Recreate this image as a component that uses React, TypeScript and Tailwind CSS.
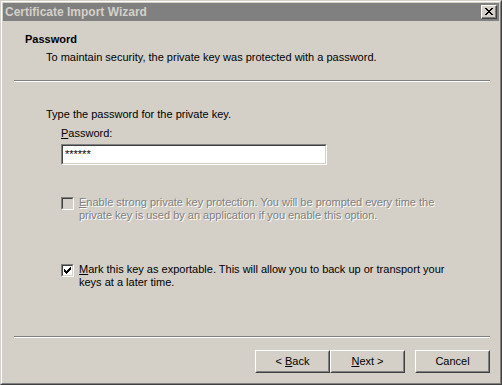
import React from "react";

const font = { fontFamily: '"Liberation Sans", Arial, sans-serif' };

function Btn({ children, ml = "" }: { children: React.ReactNode; ml?: string }) {
  return (
    <div
      className={`h-[23px] w-[75px] border border-t-white border-l-white border-r-[#404040] border-b-[#404040] ${ml}`}
    >
      <div className="flex h-full w-full items-center justify-center border border-t-[#d4d0c8] border-l-[#d4d0c8] border-r-[#808080] border-b-[#808080] text-[11px] text-black">
        {children}
      </div>
    </div>
  );
}

function Sunken({ className, children }: { className: string; children?: React.ReactNode }) {
  return (
    <div className={`border border-t-[#808080] border-l-[#808080] border-r-white border-b-white ${className}`}>
      <div className="h-full w-full border border-t-[#404040] border-l-[#404040] border-r-[#d4d0c8] border-b-[#d4d0c8]">
        {children}
      </div>
    </div>
  );
}

function Separator({ className }: { className: string }) {
  return (
    <div className={className}>
      <div className="h-px bg-[#808080]" />
      <div className="h-px bg-white" />
    </div>
  );
}

export default function App() {
  return (
    <div
      style={font}
      className="h-[385px] w-[502px] border border-t-[#d4d0c8] border-l-[#d4d0c8] border-r-[#404040] border-b-[#404040] bg-[#d4d0c8]"
    >
      <div className="flex h-full flex-col border border-t-white border-l-white border-r-[#808080] border-b-[#808080] p-px">
        {/* title bar */}
        <div className="flex h-[18px] items-center justify-between bg-[#808080] pl-[2px] pr-[2px]">
          <span className="text-[12px] font-bold leading-none text-[#d4d0c8]">Certificate Import Wizard</span>
          <div className="h-[14px] w-[16px] border border-t-white border-l-white border-r-[#404040] border-b-[#404040] bg-[#d4d0c8]">
            <div className="flex h-full w-full items-center justify-center border-b border-r border-b-[#808080] border-r-[#808080]">
              <svg width="8" height="7" viewBox="0 0 8 7">
                <path d="M0 0h2v1h1v1h2V1h1V0h2v1H7v1H6v1H5v1h1v1h1v1h1v1H6V6H5V5H3v1H2v1H0V6h1V5h1V4h1V3H2V2H1V1H0z" fill="#000" />
              </svg>
            </div>
          </div>
        </div>

        {/* header */}
        <div className="pl-[22px] pt-[12px]">
          <div className="text-[11px] font-bold leading-[13px] text-black">Password</div>
          <div className="mt-[5px] pl-[21px] text-[11px] leading-[13px] text-black">
            To maintain security, the private key was protected with a password.
          </div>
        </div>
        <Separator className="ml-[11px] mr-[9px] mt-[16px]" />

        {/* body */}
        <div className="pl-[43px] pt-[26px] text-[11px] leading-[13px] text-black">
          <div>Type the password for the private key.</div>
          <div className="pl-[15px] pt-[6px]">
            <div className="first-letter:underline">Password:</div>
            <Sunken className="mt-[4px] h-[21px] w-[266px]">
              <div className="h-full bg-white pl-[2px] text-[11px] leading-[17px]">******</div>
            </Sunken>

            <div className="mt-[31px] flex items-start gap-[5px] text-[#808080] [text-shadow:1px_1px_0_#fff]">
              <Sunken className="mt-px h-[13px] w-[13px] shrink-0">
                <div className="h-full bg-[#d4d0c8]" />
              </Sunken>
              <div className="w-[360px] first-letter:underline">
                Enable strong private key protection. You will be prompted every time the
                private key is used by an application if you enable this option.
              </div>
            </div>

            <div className="mt-[41px] flex items-start gap-[5px]">
              <Sunken className="mt-px h-[13px] w-[13px] shrink-0">
                <div className="flex h-full items-center justify-center bg-white">
                  <svg width="7" height="7" viewBox="0 0 7 7">
                    <path d="M6 0h1v3H6v1H5v1H4v1H3v1H2V6H1V5H0V2h1v1h1v1h1V3h1V2h1V1h1z" fill="#000" />
                  </svg>
                </div>
              </Sunken>
              <div className="w-[380px] first-letter:underline">
                Mark this key as exportable. This will allow you to back up or transport your
                keys at a later time.
              </div>
            </div>
          </div>
        </div>

        <div className="flex-1" />
        <Separator className="ml-[11px] mr-[9px]" />
        <div className="flex justify-end pb-[9px] pr-[9px] pt-[12px]">
          <Btn>
            &lt;&nbsp;<span className="underline">B</span>ack
          </Btn>
          <Btn>
            <span className="first-letter:underline inline-block">Next &gt;</span>
          </Btn>
          <Btn ml="ml-[10px]">Cancel</Btn>
        </div>
      </div>
    </div>
  );
}
